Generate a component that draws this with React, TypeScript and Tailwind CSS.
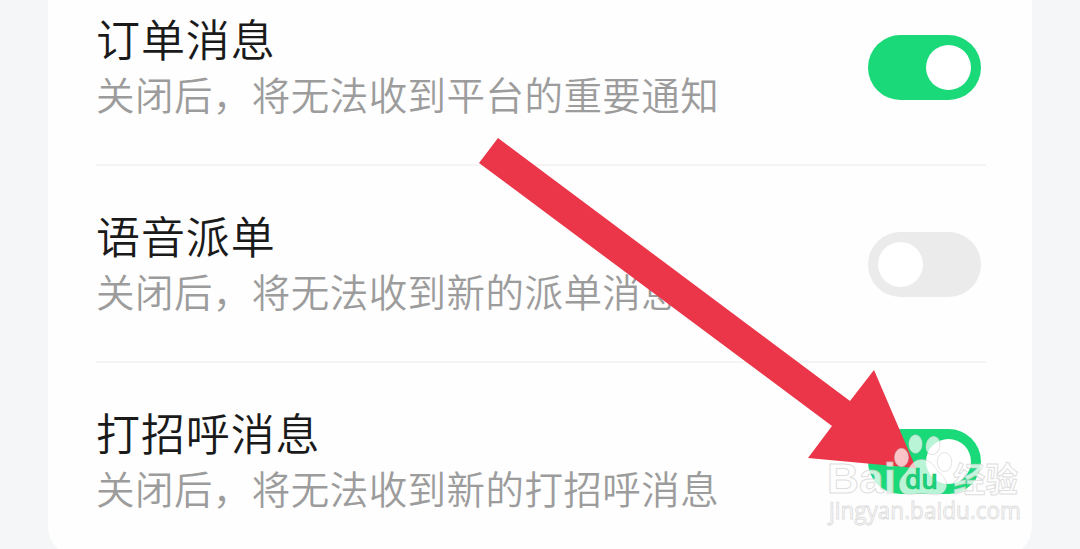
import React from 'react';
import clsx from 'clsx';

interface SettingRowProps {
  title: string;
  description: string;
  enabled: boolean;
  last?: boolean;
}

const settings: SettingRowProps[] = [
  { title: '订单消息', description: '关闭后，将无法收到平台的重要通知', enabled: true },
  { title: '语音派单', description: '关闭后，将无法收到新的派单消息', enabled: false },
  { title: '打招呼消息', description: '关闭后，将无法收到新的打招呼消息', enabled: true },
];

function Toggle({ enabled }: { enabled: boolean }) {
  return (
    <button
      type="button"
      role="switch"
      aria-checked={enabled}
      className={clsx(
        'mr-[5.5px] mt-[66px] flex h-[65px] w-[113px] items-center rounded-full px-[10px]',
        enabled ? 'justify-end bg-[#1ad979]' : 'justify-start bg-[#ebebeb]'
      )}
    >
      <span className="h-[45px] w-[45px] rounded-full bg-white" />
    </button>
  );
}

function SettingRow({ title, description, enabled, last }: SettingRowProps) {
  return (
    <div
      className={clsx(
        'flex h-[197px] shrink-0 items-start justify-between border-b-2',
        last ? 'border-transparent' : 'border-[#f4f4f4]'
      )}
    >
      <div className="whitespace-nowrap pt-[42px]">
        <h3 className="text-[44px] font-[350] leading-[54px] tracking-[0.9px] text-[#1a1a1a]">{title}</h3>
        <p className="text-[38.5px] font-[350] leading-[56px] tracking-[0.45px] text-[#9c9c9c]">
          {description}
        </p>
      </div>
      <Toggle enabled={enabled} />
    </div>
  );
}

function Arrow() {
  return (
    <svg className="pointer-events-none absolute left-0 top-0" width="1080" height="549" viewBox="0 0 1080 549">
      <polygon points="498,138 850,401 874,370 916,468 808,458 832,426 479,163" fill="#ea3648" />
    </svg>
  );
}

// Paw logo and site address, laid over the bottom right corner
function Watermark() {
  return (
    <svg
      className="pointer-events-none absolute left-[820px] top-[425px]"
      width="210"
      height="105"
      viewBox="0 0 210 105"
      fontFamily="'Open Sans', 'Noto Sans CJK SC', sans-serif"
    >
      <g fill="#ffffff" fillOpacity="0.7" stroke="#c4c4c4" strokeOpacity="0.45" strokeWidth="1">
        <ellipse cx="81.5" cy="32.5" rx="7" ry="9.3" />
        <ellipse cx="95.5" cy="19" rx="6.7" ry="9.3" />
        <ellipse cx="113" cy="20.5" rx="7" ry="9.3" transform="rotate(12 113 20.5)" />
        <ellipse cx="124.5" cy="37" rx="7.3" ry="9.5" />
        <path d="M101.500 34.500C95 34.500 91.500 39 88.500 44C85 50 79.500 52 79.500 60C79.500 67 85 70.500 91 69.500C98 68 105 68 112 69.500C121 71 126.500 66.500 126.500 59.500C126.500 52 119.500 48.500 115.500 43C112 38 108.500 34.500 101.500 34.500Z" />
      </g>
      <g fill="#ffffff" fillOpacity="0.75" stroke="#c8c8c8" strokeOpacity="0.6" strokeWidth="1">
        <text x="7" y="68" fontSize="43" fontWeight="700" fontFamily="'Liberation Sans', sans-serif" textLength="69" lengthAdjust="spacingAndGlyphs">
          Bai
        </text>
        <text x="133" y="67" fontSize="34" fontWeight="700" fontFamily="'Noto Sans CJK SC', sans-serif" textLength="65" lengthAdjust="spacingAndGlyphs">
          经验
        </text>
        <text x="9" y="94" fontSize="24" fontWeight="400" textLength="192" lengthAdjust="spacingAndGlyphs">
          jingyan.baidu.com
        </text>
      </g>
      <text x="85" y="64" fontSize="27" fontWeight="600" fill="#1ad27a" stroke="#18bd6c" strokeWidth="0.6" textLength="33" lengthAdjust="spacingAndGlyphs">
        du
      </text>
    </svg>
  );
}

export default function App() {
  return (
    <div className="relative flex h-[549px] w-[1080px] justify-center overflow-hidden bg-[#f5f6f8] font-['Noto_Sans_CJK_SC',sans-serif]">
      <div className="flex h-[555px] w-[984px] flex-col overflow-hidden rounded-b-[28px] bg-[#fefefe] pl-[48px] pr-[46px]">
        <div className="-mt-[31px] flex flex-col">
          {settings.map((item, index) => (
            <SettingRow key={item.title} {...item} last={index === settings.length - 1} />
          ))}
        </div>
      </div>
      <Arrow />
      <Watermark />
    </div>
  );
}
